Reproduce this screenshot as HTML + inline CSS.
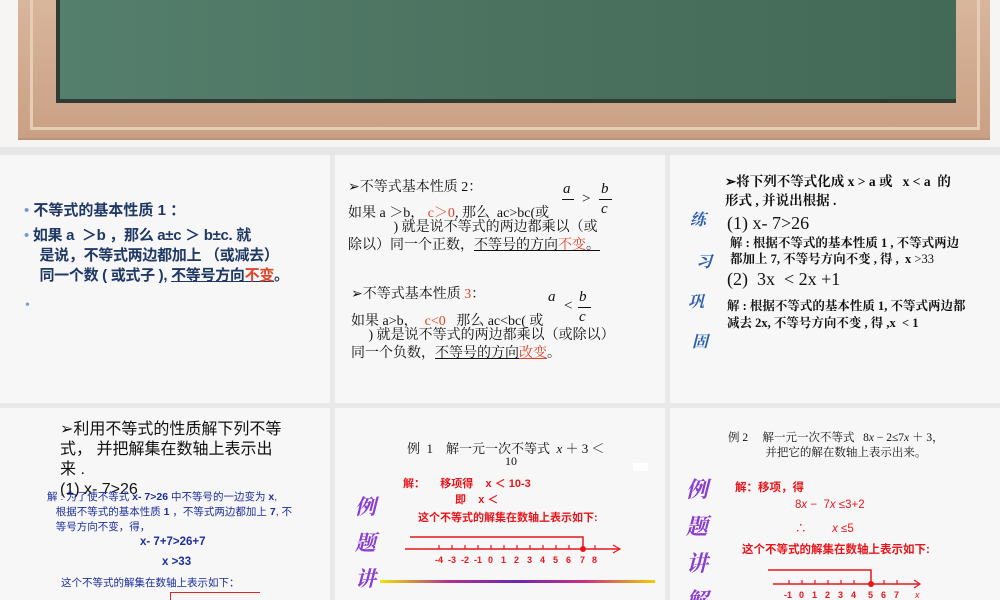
<!DOCTYPE html>
<html><head><meta charset="utf-8"><style>
*{margin:0;padding:0;box-sizing:border-box}
body{width:1000px;height:600px;background:#e9e9ea;position:relative;overflow:hidden;font-family:"Liberation Serif","Noto Serif CJK SC",serif;color:#111}
.p{position:absolute;background:#f7f7f8;overflow:hidden}
.a{position:absolute;white-space:nowrap}
.s{font-family:"Liberation Sans","Noto Sans CJK SC",sans-serif}
.r{color:#e0452a}
.u{text-decoration:underline}
.red{color:#e8161b}
.blue{color:#1d2f9a}
.v{position:absolute;font-family:"Noto Serif CJK SC",serif;font-weight:bold}
</style></head><body>
<div style="position:absolute;left:0;top:0;width:1000px;height:150px;background:#f6f5f3"></div>
<div style="position:absolute;left:18px;top:0;width:972px;height:140px;background:linear-gradient(#d8b69c,#caa084);border-bottom:2px solid #b89478"></div>
<div style="position:absolute;left:30px;top:0;width:950px;height:130px;border:3px solid #e6cdb6;border-top:none"></div>
<div style="position:absolute;left:56px;top:0;width:900px;height:103px;background:linear-gradient(90deg,#557f6d,#4b725f 50%,#426a57);border-left:4px solid #2e3e34;border-bottom:4px solid #2f3b33"></div>
<div style="position:absolute;left:0;top:147px;width:1000px;height:8px;background:#e6e6e7"></div>

<!-- panel 1 -->
<div class="p" style="left:0;top:155px;width:330px;height:248px">
<div class="a s" style="left:24px;top:46px;font-size:15px;color:#1f3864;line-height:20px;font-weight:bold">
<span style="color:#7d95d8;font-weight:normal">•</span> 不等式的基本性质 1 ：</div>
<div class="a s" style="left:24px;top:71px;font-size:15px;color:#1f3864;line-height:20px;font-weight:bold;letter-spacing:-0.3px">
<span style="color:#7d95d8;font-weight:normal">•</span> 如果 a &nbsp;＞b ，那么 a±c ＞ b±c. 就<br>
&nbsp;&nbsp;&nbsp;&nbsp;是说，不等式两边都加上 （或减去）<br>
&nbsp;&nbsp;&nbsp;&nbsp;同一个数 ( 或式子 ), <span class="u">不等号方向<span class="r">不变</span></span>。</div>
<div class="a" style="left:25px;top:143px;color:#7d95d8;font-size:14px">•</div>
</div>

<!-- panel 2 -->
<div class="p" style="left:335px;top:155px;width:330px;height:248px;font-size:14px">
<div class="a" style="left:13px;top:21px">➢不等式基本性质 2：</div>
<div class="a" style="left:13px;top:47px">如果 a ＞b， <span class="r">c＞0</span>, 那么 &nbsp;ac&gt;bc(或</div>
<div class="a" style="left:228px;top:26px;font-style:italic;font-size:15px">a</div>
<div class="a" style="left:227px;top:44px;width:12px;border-top:1px solid #111"></div>
<div class="a" style="left:247px;top:36px;font-size:15px">&gt;</div>
<div class="a" style="left:266px;top:26px;font-style:italic;font-size:15px">b</div>
<div class="a" style="left:264px;top:44px;width:13px;border-top:1px solid #111"></div>
<div class="a" style="left:266px;top:46px;font-style:italic;font-size:15px">c</div>
<div class="a" style="left:13px;top:64px;line-height:18px">&nbsp;&nbsp;&nbsp;&nbsp;&nbsp;&nbsp;&nbsp;&nbsp;&nbsp;&nbsp;&nbsp;&nbsp;&nbsp;) 就是说不等式的两边都乘以（或<br>除以）同一个正数，<span class="u">不等号的方向<span class="r">不变</span>。</span></div>
<div class="a" style="left:16px;top:128px">➢不等式基本性质 <span class="r">3</span>：</div>
<div class="a" style="left:16px;top:155px">如果 a&gt;b， &nbsp;<span class="r">c&lt;0</span> &nbsp;&nbsp;那么 ac&lt;bc( 或</div>
<div class="a" style="left:213px;top:134px;font-style:italic;font-size:15px">a</div>
<div class="a" style="left:229px;top:143px;font-size:15px">&lt;</div>
<div class="a" style="left:244px;top:134px;font-style:italic;font-size:15px">b</div>
<div class="a" style="left:243px;top:152px;width:13px;border-top:1px solid #111"></div>
<div class="a" style="left:244px;top:154px;font-style:italic;font-size:15px">c</div>
<div class="a" style="left:16px;top:172px;line-height:18px">&nbsp;&nbsp;&nbsp;&nbsp;&nbsp;) 就是说不等式的两边都乘以（或除以）<br>同一个负数，<span class="u">不等号的方向</span><span class="r u">改变</span>。</div>
</div>

<!-- panel 3 -->
<div class="p" style="left:670px;top:155px;width:330px;height:248px;font-size:13.5px">
<div class="v" style="left:20px;top:52px;color:#2c5fb0;font-size:16px;font-style:italic">练</div>
<div class="v" style="left:26px;top:94px;color:#2c5fb0;font-size:16px;font-style:italic">习</div>
<div class="v" style="left:18px;top:134px;color:#2c5fb0;font-size:16px;font-style:italic">巩</div>
<div class="v" style="left:22px;top:174px;color:#2c5fb0;font-size:16px;font-style:italic">固</div>
<div class="a" style="left:55px;top:17px;line-height:19px;font-weight:bold">➢将下列不等式化成 x &gt; a 或 &nbsp;&nbsp;x &lt; a &nbsp;的<br>形式 , 并说出根据 .</div>
<div class="a" style="left:57px;top:58px;font-size:18px">(1) x- 7&gt;26</div>
<div class="a" style="left:60px;top:80px;font-size:12.5px;line-height:16px;font-weight:bold">解 : 根据不等式的基本性质 1 , 不等式两边<br>都加上 7, 不等号方向不变 , 得 , &nbsp;x <span style="font-weight:normal">&gt;33</span></div>
<div class="a" style="left:57px;top:114px;font-size:18px">(2) &nbsp;3x &nbsp;&lt; 2x +1</div>
<div class="a" style="left:57px;top:143px;font-size:12.5px;line-height:17px;font-weight:bold">解 : 根据不等式的基本性质 1, 不等式两边都<br>减去 2x, 不等号方向不变 , 得 ,x &nbsp;&lt; 1</div>
</div>

<!-- panel 4 -->
<div class="p" style="left:0;top:408px;width:330px;height:192px">
<div class="a s" style="left:60px;top:12px;font-size:16px;line-height:20px">➢利用不等式的性质解下列不等<br>式， 并把解集在数轴上表示出<br>来 .<br>(1) x- 7&gt;26</div>
<div class="a s blue" style="left:47px;top:82px;font-size:10.5px;line-height:15px">解 : 为了使不等式 <b>x- 7&gt;26</b> 中不等号的一边变为 <b>x</b>,<br>&nbsp;&nbsp;&nbsp;根据不等式的基本性质 <b>1</b> ，不等式两边都加上 <b>7</b>, 不<br>&nbsp;&nbsp;&nbsp;等号方向不变，得，</div>
<div class="a s blue" style="left:140px;top:128px;font-size:11.5px;font-weight:bold">x- 7+7&gt;26+7</div>
<div class="a s blue" style="left:162px;top:148px;font-size:11.5px;font-weight:bold">x &gt;33</div>
<div class="a s blue" style="left:61px;top:167px;font-size:10.5px">这个不等式的解集在数轴上表示如下：</div>
<div class="a" style="left:170px;top:184px;width:90px;height:10px;border-left:1px solid #d22;border-top:1px solid #d22"></div>
</div>

<!-- panel 5 -->
<div class="p" style="left:335px;top:408px;width:330px;height:192px">
<div class="v" style="left:20px;top:80px;color:#8b3dd1;font-size:21px;line-height:36px;font-style:italic">例<br>题<br>讲<br>解</div>
<div class="a" style="left:72px;top:30px;font-size:13px">例 &nbsp;1 &nbsp;&nbsp;&nbsp;解一元一次不等式 &nbsp;<i>x</i> ＋ 3 ＜</div>
<div class="a" style="left:170px;top:46px;font-size:12px">10</div>
<div class="a" style="left:298px;top:55px;width:15px;height:8px;background:#fff"></div>
<div class="a s red" style="left:68px;top:67px;font-size:11px;font-weight:bold">解： &nbsp;&nbsp;&nbsp;&nbsp;移项得 &nbsp;&nbsp;&nbsp;x ＜ 10-3</div>
<div class="a s red" style="left:120px;top:83px;font-size:11px;font-weight:bold">即 &nbsp;&nbsp;&nbsp;x ＜</div>
<div class="a s red" style="left:83px;top:101px;font-size:11px;font-weight:bold">这个不等式的解集在数轴上表示如下:</div>
<svg class="a" style="left:70px;top:120px" width="250" height="40">
<polyline points="5,9 178,9 178,20" fill="none" stroke="#e8161b" stroke-width="1.5"/>
<line x1="0" y1="21" x2="215" y2="21" stroke="#e8161b" stroke-width="1.5"/>
<polyline points="208,17 215,21 208,25" fill="none" stroke="#e8161b" stroke-width="1.2"/>
<g stroke="#e8161b" stroke-width="1.2">
<line x1="34" y1="17" x2="34" y2="21"/><line x1="47" y1="17" x2="47" y2="21"/><line x1="60" y1="17" x2="60" y2="21"/><line x1="73" y1="17" x2="73" y2="21"/><line x1="86" y1="17" x2="86" y2="21"/><line x1="99" y1="17" x2="99" y2="21"/><line x1="112" y1="17" x2="112" y2="21"/><line x1="125" y1="17" x2="125" y2="21"/><line x1="138" y1="17" x2="138" y2="21"/><line x1="151" y1="17" x2="151" y2="21"/><line x1="164" y1="17" x2="164" y2="21"/><line x1="190" y1="17" x2="190" y2="21"/></g>
<circle cx="178" cy="21" r="3" fill="#e8161b"/>
<text y="35" font-family="Liberation Sans" font-size="9" font-weight="bold" fill="#e8161b"><tspan x="30">-4</tspan><tspan x="43">-3</tspan><tspan x="56">-2</tspan><tspan x="69">-1</tspan><tspan x="83">0</tspan><tspan x="96">1</tspan><tspan x="109">2</tspan><tspan x="122">3</tspan><tspan x="135">4</tspan><tspan x="148">5</tspan><tspan x="161">6</tspan><tspan x="175">7</tspan><tspan x="187">8</tspan></text>
</svg>
<div class="a" style="left:45px;top:172px;width:275px;height:3px;background:linear-gradient(90deg,#f2e600,#b03090,#6a2ab0,#d03080,#f0d000)"></div>
</div>

<!-- panel 6 -->
<div class="p" style="left:670px;top:408px;width:330px;height:192px">
<div class="v" style="left:16px;top:62px;color:#8b3dd1;font-size:22px;line-height:37px;font-style:italic">例<br>题<br>讲<br>解</div>
<div class="a" style="left:58px;top:23px;font-size:11.5px;line-height:15px">例 2 &nbsp;&nbsp;&nbsp;&nbsp;解一元一次不等式 &nbsp;&nbsp;8<i>x</i> − 2≤7<i>x</i> ＋ 3，<br>&nbsp;&nbsp;&nbsp;&nbsp;&nbsp;&nbsp;&nbsp;&nbsp;&nbsp;&nbsp;&nbsp;&nbsp;&nbsp;并把它的解在数轴上表示出来。</div>
<div class="a s red" style="left:65px;top:71px;font-size:11.5px;font-weight:bold">解：移项，得</div>
<div class="a s red" style="left:125px;top:91px;font-size:11.5px">8<i>x</i> − &nbsp;7<i>x</i> ≤3+2</div>
<div class="a s red" style="left:125px;top:112px;font-size:11.5px">∴ &nbsp;&nbsp;&nbsp;&nbsp;&nbsp;&nbsp;&nbsp;<i>x</i> ≤5</div>
<div class="a s red" style="left:72px;top:133px;font-size:11.5px;font-weight:bold">这个不等式的解集在数轴上表示如下:</div>
<svg class="a" style="left:95px;top:152px" width="160" height="40">
<polyline points="3,10 106,10 106,24" fill="none" stroke="#e8161b" stroke-width="1.5"/>
<line x1="8" y1="24" x2="155" y2="24" stroke="#e8161b" stroke-width="1.5"/>
<polyline points="149,20 155,24 149,28" fill="none" stroke="#e8161b" stroke-width="1.2"/>
<g stroke="#e8161b" stroke-width="1.2"><line x1="24" y1="20" x2="24" y2="24"/><line x1="37" y1="20" x2="37" y2="24"/><line x1="50" y1="20" x2="50" y2="24"/><line x1="63" y1="20" x2="63" y2="24"/><line x1="76" y1="20" x2="76" y2="24"/><line x1="89" y1="20" x2="89" y2="24"/><line x1="119" y1="20" x2="119" y2="24"/><line x1="132" y1="20" x2="132" y2="24"/></g>
<circle cx="106" cy="24" r="3" fill="#e8161b"/>
<text y="38" font-family="Liberation Sans" font-size="9" font-weight="bold" fill="#e8161b"><tspan x="19">-1</tspan><tspan x="34">0</tspan><tspan x="47">1</tspan><tspan x="60">2</tspan><tspan x="73">3</tspan><tspan x="86">4</tspan><tspan x="103">5</tspan><tspan x="116">6</tspan><tspan x="129">7</tspan><tspan x="150" font-style="italic" font-weight="normal">x</tspan></text>
</svg>
</div>
</body></html>
